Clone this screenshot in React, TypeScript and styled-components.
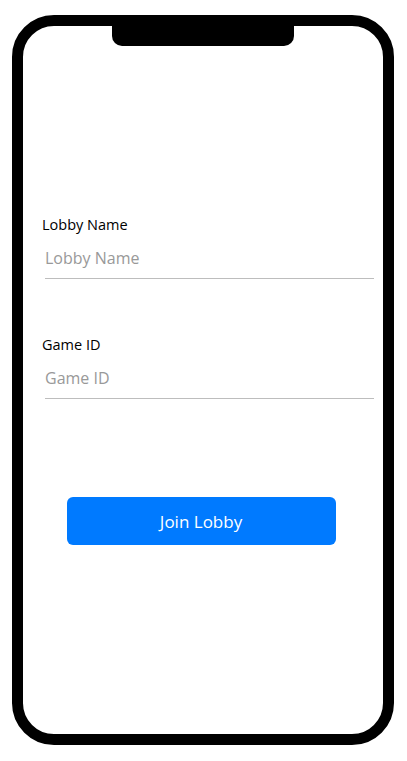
import React from "react";
import styled, { createGlobalStyle } from "styled-components";

const Global = createGlobalStyle`
  html, body { margin: 0; padding: 0; background: #fff; }
  body { font-family: "Open Sans", "Noto Sans", sans-serif; }
`;

const Page = styled.div`
  width: 407px;
  height: 761px;
  padding: 15px 0 0 12px;
  box-sizing: border-box;
`;

const Phone = styled.div`
  position: relative;
  width: 382px;
  height: 730px;
  box-sizing: border-box;
  border: 11px solid #000;
  border-radius: 42px;
  background: #fff;
  display: flex;
  flex-direction: column;
`;

const Notch = styled.div`
  position: absolute;
  top: 0;
  left: 50%;
  transform: translateX(-50%);
  width: 182px;
  height: 20px;
  background: #000;
  border-radius: 0 0 10px 10px;
`;

const Form = styled.div`
  display: flex;
  flex-direction: column;
  padding: 189px 9px 0 19px;
`;

const Field = styled.div`
  display: flex;
  flex-direction: column;
  margin-bottom: 56px;
`;

const Label = styled.label`
  font-size: 14.5px;
  line-height: 20px;
  color: #000;
`;

const Input = styled.input`
  margin: 12px 0 0 3px;
  padding: 0 0 9px 0;
  border: none;
  border-bottom: 1px solid #bdbdbd;
  font-family: inherit;
  font-size: 16px;
  line-height: 22px;
  color: #333;
  outline: none;
  background: transparent;
  &::placeholder { color: #999; }
`;

const Actions = styled.div`
  display: flex;
  justify-content: center;
  padding-right: 14px;
  margin-top: 42px;
`;

const Button = styled.button`
  width: 269px;
  height: 48px;
  border: none;
  border-radius: 6px;
  background: #007aff;
  color: #fff;
  font-family: inherit;
  font-size: 17px;
  cursor: pointer;
`;

export default function App() {
  return (
    <>
      <Global />
      <Page>
        <Phone>
          <Notch />
          <Form>
            <Field>
              <Label>Lobby Name</Label>
              <Input placeholder="Lobby Name" />
            </Field>
            <Field>
              <Label>Game ID</Label>
              <Input placeholder="Game ID" />
            </Field>
            <Actions>
              <Button>Join Lobby</Button>
            </Actions>
          </Form>
        </Phone>
      </Page>
    </>
  );
}
